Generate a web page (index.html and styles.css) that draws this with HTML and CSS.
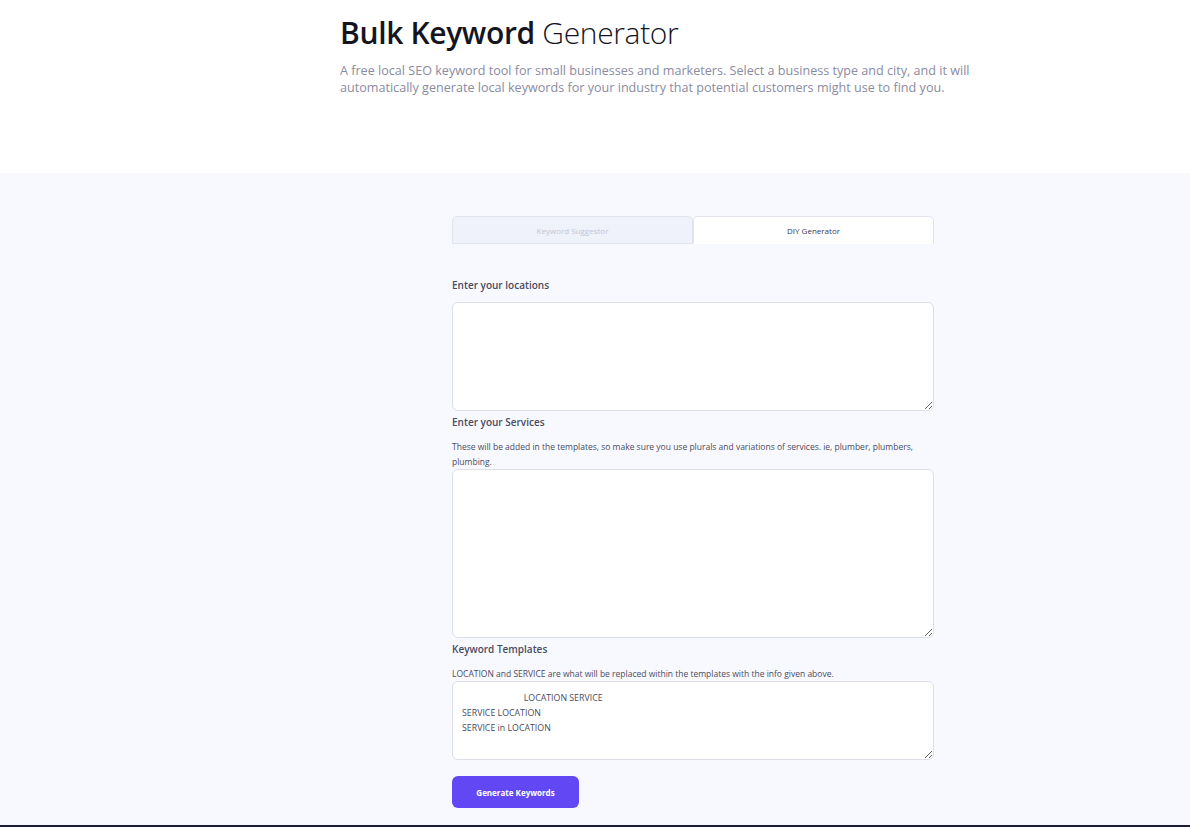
FILE: index.html
```html
<!DOCTYPE html>
<html lang="en">
<head>
<meta charset="utf-8">
<title>Bulk Keyword Generator</title>
<link rel="stylesheet" href="styles.css">
</head>
<body>
<header class="hero">
  <div class="hero-inner">
    <h1 class="title"><span class="title-strong">Bulk Keyword</span> Generator</h1>
    <p class="lead">A free local SEO keyword tool for small businesses and marketers. Select a business type and city, and it will automatically generate local keywords for your industry that potential customers might use to find you.</p>
  </div>
</header>
<main class="tool">
  <div class="form">
    <div class="tabs">
      <div class="tab tab-inactive">Keyword Suggestor</div>
      <div class="tab tab-active">DIY Generator</div>
    </div>
    <label class="label label-first" for="loc">Enter your locations</label>
    <textarea id="loc" class="field field-loc"></textarea>
    <label class="label" for="svc">Enter your Services</label>
    <p class="help">These will be added in the templates, so make sure you use plurals and variations of services. ie, plumber, plumbers, plumbing.</p>
    <textarea id="svc" class="field field-svc"></textarea>
    <label class="label" for="tpl">Keyword Templates</label>
    <p class="help">LOCATION and SERVICE are what will be replaced within the templates with the info given above.</p>
    <textarea id="tpl" class="field field-tpl">                           LOCATION SERVICE
SERVICE LOCATION
SERVICE in LOCATION</textarea>
    <button class="btn" type="button">Generate Keywords</button>
  </div>
</main>
<footer class="footer"></footer>
</body>
</html>
```
FILE: styles.css
```css
* { box-sizing: border-box; }
html, body { margin: 0; padding: 0; }
body {
  font-family: "Open Sans", "Noto Sans", sans-serif;
  background: #ffffff;
  color: #1c1c2e;
}
.hero {
  height: 173px;
  background: #ffffff;
}
.hero-inner {
  margin-left: 340px;
  width: 650px;
  padding-top: 13px;
}
.title {
  margin: 0;
  font-size: 30px;
  line-height: 40px;
  font-weight: 300;
  color: #15151f;
  letter-spacing: -0.35px;
}
.title-strong { font-weight: 600; }
.lead {
  margin: 9px 0 0;
  font-size: 12.6px;
  line-height: 17px;
  color: #8b8ba1;
}
.tool {
  background: #f8f9fe;
  padding: 43px 0 17px;
}
.form {
  margin-left: 452px;
  width: 482px;
  display: flex;
  flex-direction: column;
  align-items: flex-start;
}
.tabs {
  display: flex;
  width: 100%;
}
.tab {
  flex: 1;
  height: 28px;
  display: flex;
  align-items: center;
  justify-content: center;
  font-size: 8px;
  border: 1px solid #e1e4f0;
  border-radius: 5px 5px 0 0;
}
.tab-inactive {
  background: #eff1fb;
  color: #c3c6d4;
}
.tab-active {
  background: #ffffff;
  color: #3a3a4c;
  border-bottom-color: transparent;
}
.label {
  font-size: 10px;
  line-height: 15px;
  font-weight: 600;
  color: #4b4b60;
  margin-top: 4px;
  margin-bottom: 9px;
}
.label-first { margin-top: 34px; }
.help {
  margin: 0;
  width: 100%;
  font-size: 8.5px;
  line-height: 15px;
  color: #4b4b60;
}
.field {
  display: block;
  width: 100%;
  background: #ffffff;
  border: 1px solid #dcdfea;
  border-radius: 6px;
  font-family: inherit;
  font-size: 8.8px;
  line-height: 15px;
  color: #4b4b60;
  padding: 9px 9px;
  margin: 0;
}
.field-loc { height: 109px; }
.field-svc { height: 169px; }
.field-tpl { height: 79px; }
.btn {
  margin-top: 16px;
  width: 127px;
  height: 32px;
  border: 0;
  border-radius: 6px;
  background: #6247f5;
  color: #ffffff;
  font-family: inherit;
  font-size: 8px;
  font-weight: 700;
}
.footer {
  height: 2px;
  background: #1b1e3a;
}
```
